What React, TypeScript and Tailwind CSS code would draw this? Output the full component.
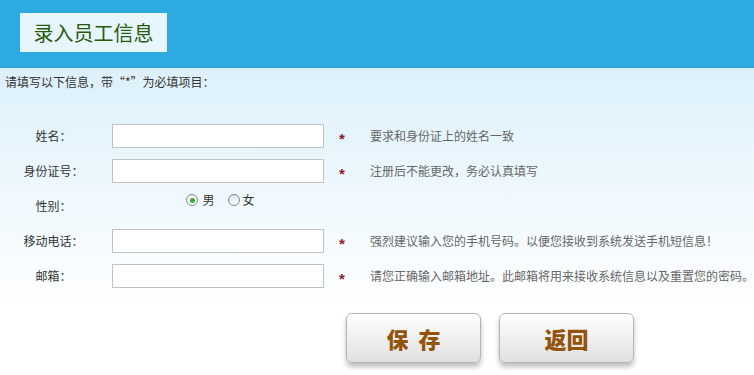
import React from "react";

const font = { fontFamily: '"Noto Sans CJK SC", "Noto Sans", sans-serif' };

type Row = { label: string; hint: string };

const Star = () => (
  <div className="flex w-[36px] justify-center">
    <span
      className="mt-[5px] text-[15px] font-bold leading-none text-[#8a1c2e]"
      style={{ fontFamily: '"Liberation Sans", sans-serif' }}
    >
      *
    </span>
  </div>
);

const Field = ({ label, hint }: Row) => (
  <div className="flex h-[35px] items-center">
    <div className="w-[107px] text-center text-[12px] text-[#333]">{label}</div>
    <div className="w-[5px]" />
    <input
      type="text"
      className="h-[24px] w-[212px] border border-[#c3c3c3] bg-white outline-none"
    />
    <Star />
    <div className="ml-[10px] text-[12px] text-[#666]">{hint}</div>
  </div>
);

export default function App() {
  return (
    <div className="h-[375px] w-[754px] overflow-hidden bg-white" style={font}>
      <div className="h-[68px] border-b border-[#29a1d8] bg-[#2eaae2] pl-[20px] pt-[13px]">
        <div className="flex h-[39px] w-[147px] items-center justify-center bg-[#e7f6fc] text-[20px] text-[#2a5a10]">
          录入员工信息
        </div>
      </div>
      <div className="bg-gradient-to-b from-[#dcf0fb] via-[#eef8fd] to-white pb-[20px]">
        <div className="pl-[5px] pt-[4px] text-[12px] leading-[20px] text-[#333]">
          请填写以下信息，带“*”为必填项目：
        </div>
        <div className="mt-[26px]">
          <Field label="姓名：" hint="要求和身份证上的姓名一致" />
          <Field label="身份证号：" hint="注册后不能更改，务必认真填写" />
          <div className="flex h-[35px] items-center">
            <div className="w-[107px] text-center text-[12px] text-[#333]">性别：</div>
            <div className="w-[5px]" />
            <div className="flex w-[212px] items-start justify-center self-start pl-[5px] pt-[5px] text-[12px] text-[#333]">
              <label className="flex items-center">
                <span className="flex h-[12px] w-[12px] items-center justify-center rounded-full border border-[#7a8a99] bg-gradient-to-b from-[#f4f4f4] to-white">
                  <span className="h-[5px] w-[5px] rounded-full bg-[#3aa93a]" />
                </span>
                <span className="ml-[4px] leading-[14px]">男</span>
              </label>
              <label className="ml-[13px] flex items-center">
                <span className="h-[12px] w-[12px] rounded-full border border-[#7a8a99] bg-gradient-to-b from-[#e4e4e4] to-white" />
                <span className="ml-[3px] leading-[14px]">女</span>
              </label>
            </div>
          </div>
          <Field label="移动电话：" hint="强烈建议输入您的手机号码。以便您接收到系统发送手机短信息！" />
          <Field label="邮箱：" hint="请您正确输入邮箱地址。此邮箱将用来接收系统信息以及重置您的密码。" />
        </div>
      </div>
      <div className="flex gap-[18px] pl-[346px]">
        <button className="flex h-[50px] w-[135px] items-center justify-center rounded-[6px] border border-[#b5b5b5] bg-gradient-to-b from-white to-[#e0e0e0] pl-[10px] text-[22px] font-black tracking-[10px] text-[#93530a] shadow-[0_4px_5px_rgba(0,0,0,0.25)]">
          保存
        </button>
        <button className="flex h-[50px] w-[135px] items-center justify-center rounded-[6px] border border-[#b5b5b5] bg-gradient-to-b from-white to-[#e0e0e0] text-[22px] font-black text-[#93530a] shadow-[0_4px_5px_rgba(0,0,0,0.25)]">
          返回
        </button>
      </div>
    </div>
  );
}
